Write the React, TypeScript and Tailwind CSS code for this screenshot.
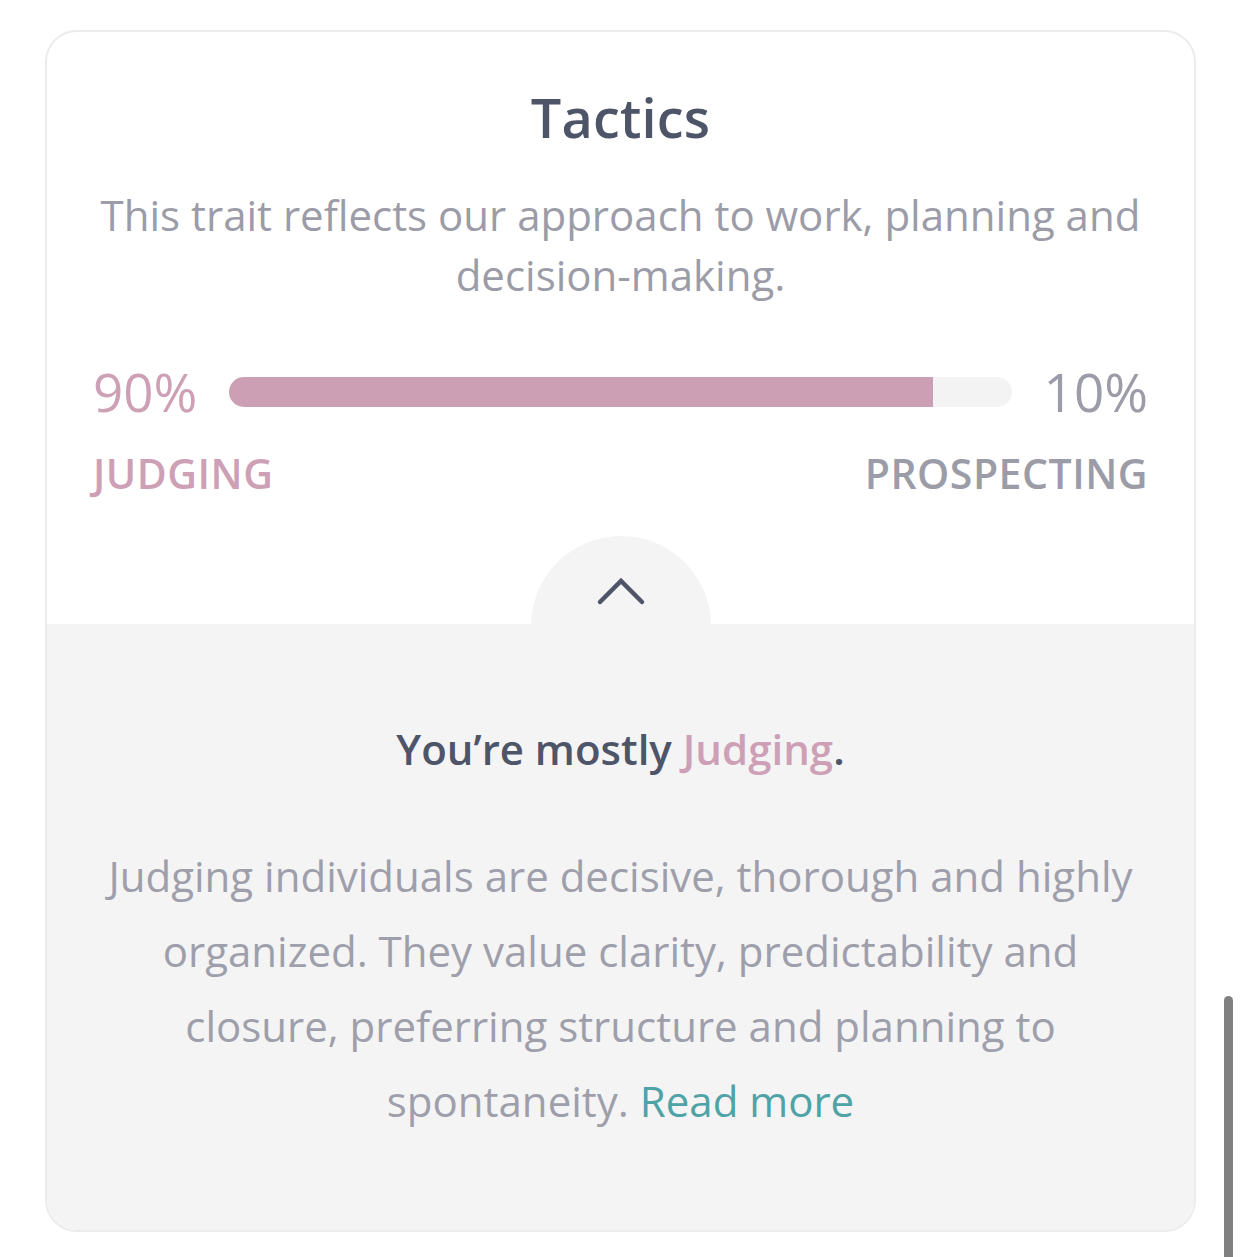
import React from "react";

export default function App() {
  return (
    <div
      className="relative w-[1242px] h-[1257px] bg-white overflow-hidden"
      style={{ fontFamily: '"Open Sans", "Noto Sans", sans-serif' }}
    >
      <div className="absolute left-[45px] top-[30px] w-[1151px] h-[1202px] rounded-[32px] border-2 border-[#ececee] overflow-hidden flex flex-col bg-white">
        {/* Top section */}
        <div className="relative flex flex-col items-center pt-[53px] h-[592px] shrink-0">
          <h2 className="text-[54px] leading-[64px] font-semibold text-[#4f5569] tracking-[0.2px]">
            Tactics
          </h2>
          <p className="mt-[36px] px-[40px] text-center text-[42px] leading-[60px] text-[#9b9ca7]">
            This trait reflects our approach to work, planning and decision-making.
          </p>
          <div className="mt-[55px] w-full px-[46px] flex items-center h-[64px]">
            <span className="text-[53px] leading-[64px] text-[#cea0b5]">90%</span>
            <div className="flex-1 mx-[32px] h-[30px] rounded-full bg-[#f3f3f4] flex overflow-hidden">
              <div className="h-full w-[90%] bg-[#cc9fb4]" />
            </div>
            <span className="text-[53px] leading-[64px] text-[#9b9ca7]">10%</span>
          </div>
          <div className="mt-[24px] w-full px-[46px] flex justify-between h-[50px] items-center">
            <span className="text-[41px] leading-[50px] font-semibold text-[#cea0b5] tracking-[0.5px]">
              JUDGING
            </span>
            <span className="text-[41px] leading-[50px] font-semibold text-[#9b9ca7] tracking-[0.5px]">
              PROSPECTING
            </span>
          </div>
          {/* Semicircle toggle */}
          <div className="absolute left-1/2 -translate-x-1/2 bottom-[-92px] w-[180px] h-[180px] rounded-full bg-[#f4f4f5] flex justify-center pt-[40px]">
            <svg width="50" height="30" viewBox="0 0 50 30" fill="none">
              <path
                d="M4 26 L25 5 L46 26"
                stroke="#4f5569"
                strokeWidth="4.5"
                strokeLinecap="round"
                strokeLinejoin="miter"
              />
            </svg>
          </div>
        </div>
        {/* Bottom section */}
        <div className="flex-1 bg-[#f4f4f5] flex flex-col items-center pt-[97px] px-[46px]">
          <p className="text-[42px] leading-[56px] font-semibold text-[#4f5569]">
            You’re mostly <span className="text-[#cea0b5]">Judging</span>.
          </p>
          <p className="mt-[61px] text-center text-[42px] leading-[75px] text-[#9e9fab]">
            Judging individuals are decisive, thorough and highly organized. They value clarity,
            predictability and closure, preferring structure and planning to spontaneity.{" "}
            <span className="text-[#4fa3a7]">Read more</span>
          </p>
        </div>
      </div>
      {/* Scrollbar */}
      <div className="absolute left-[1224px] top-[996px] w-[9px] h-[280px] rounded-full bg-[#808080]" />
    </div>
  );
}
